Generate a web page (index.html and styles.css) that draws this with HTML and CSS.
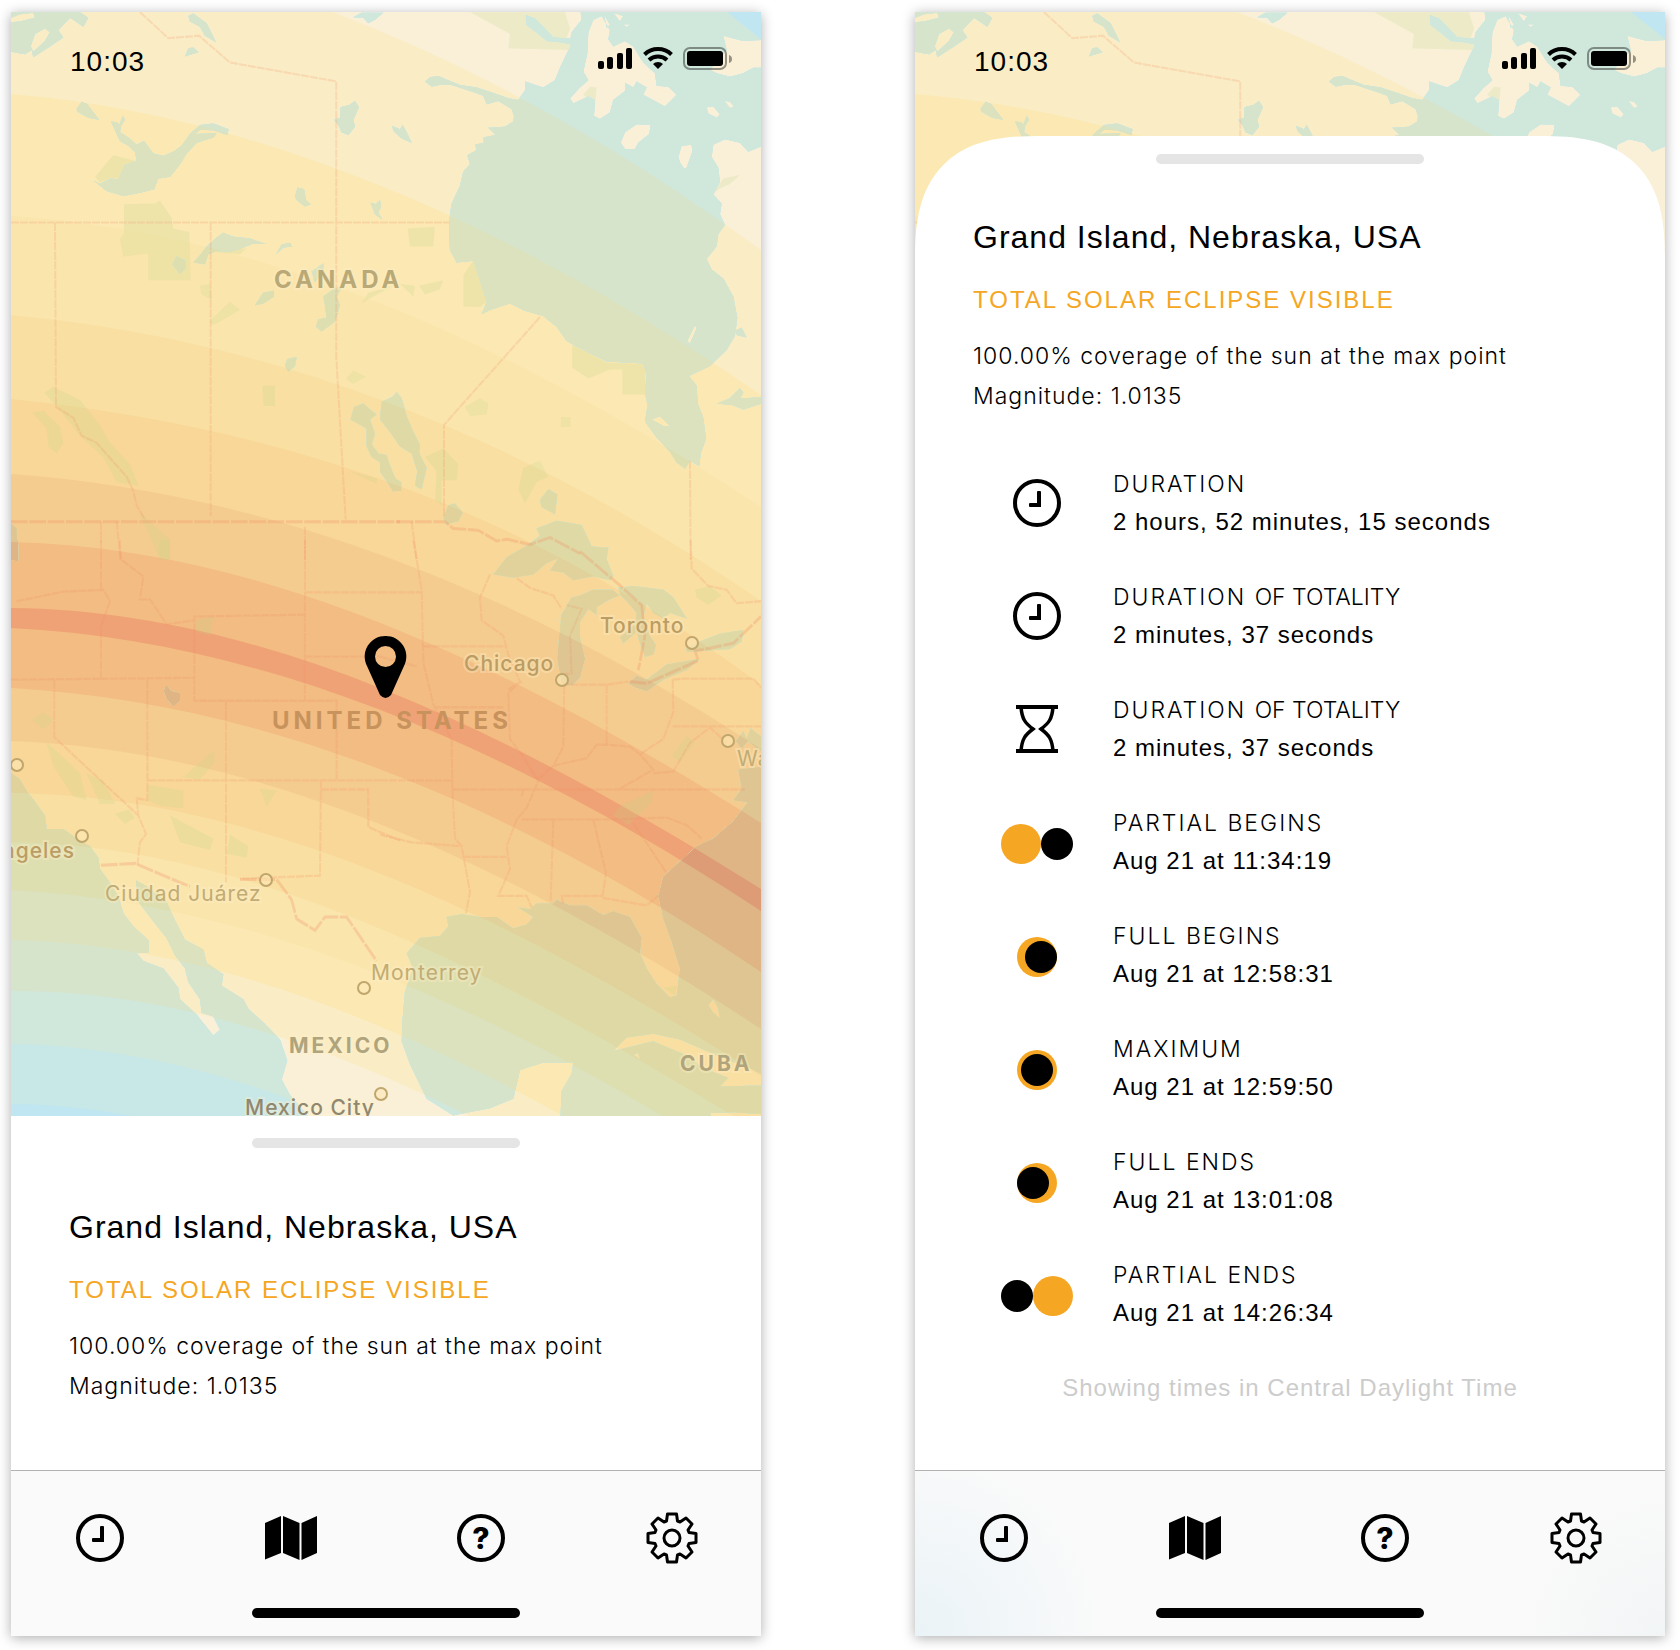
FILE: index.html
```html
<!DOCTYPE html>
<html lang="en">
<head>
<meta charset="utf-8">
<meta name="viewport" content="width=device-width, initial-scale=1">
<title>Eclipse map</title>
<link rel="stylesheet" href="styles.css">
</head>
<body>
<svg class="defs" aria-hidden="true">
  <defs>
    <!-- Areas of equal coverage, nested from the faintest to totality -->
    <g id="bands">
      <path class="b0" d="M0 0H780V1430H0Z"/>
      <path class="b1" d="M0 0H700L761 39 790 60V1420L761 1410C511 1250 261 1107 11 1104L0 1104Z"/>
      <path class="b2" d="M0 0H680L727 12 761 39 790 60V1370L761 1350C511 1190 261 1047 11 1044L0 1044Z"/>
      <path class="b3" d="M0 0H300L333 12C476 67 618 145 761 250L790 270V1300L761 1290C511 1123 261 990 11 991L0 991Z"/>
      <path class="b4" d="M0 94H11C261 115 511 223 761 395L790 415V1245L761 1235C511 1074 261 945 11 940L0 940Z"/>
      <path class="b5" d="M0 216H11C261 232 511 342 761 507L790 525V1190L761 1178C511 1013 261 903 11 890L0 890Z"/>
      <path class="b6" d="M0 315H11C261 338 511 428 761 601L790 620V1145L761 1133C511 979 261 846 11 842L0 842Z"/>
      <path class="b7" d="M0 399H11C261 425 511 497 761 685L790 700V1090L761 1076C511 916 261 796 11 793L0 793Z"/>
      <path class="b8" d="M0 474H11C261 492 511 585 761 749L790 765V1045L761 1029C511 864 261 750 11 741L0 741Z"/>
      <path class="b9" d="M0 542H11C261 547 511 665 761 823L790 838V990L761 972C511 802 261 702 11 688L0 688Z"/>
      <path class="b10" d="M0 608H11C261 610 511 732 761 889L790 905V928L761 911C511 746 261 640 11 628L0 628Z"/>
    </g>

    <!-- Seas and lakes, one path per map tile -->
    <clipPath id="water">
      <path clip-rule="evenodd" transform="scale(.3333 .3571)" d="M33 34V145L75 152 95 140 100 160 150 130 190 105 175 85 210 50 250 75 265 50 240 34ZM92 130L105 95 135 80 150 90 135 115 100 145ZM33 50L60 40 100 36 105 50 60 60 33 62Z
        M565 45L580 38 620 65 648 118 615 100 600 75 570 60ZM555 158L565 135 580 133 596 146 575 152ZM1060 48L1085 36 1150 36 1125 55 1105 65 1090 50Z
        M230 305L245 285 262 292 297 335 265 330 232 312Z
        M333 340L352 343 358 350 368 325 375 335 362 355 360 370 385 385 410 405 432 395 460 430 490 437 520 425 545 408 570 375 600 350 640 346 686 362 682 378 640 365 600 363 585 375 650 373 640 385 590 400 560 430 540 460 510 495 475 500 462 530 420 540 370 549 320 535 280 505 300 515 330 500 355 502 375 462 410 450 405 425 385 408 360 395 345 365Z
        M1003 335L1020 330 1022 300 1050 293 1065 283 1077 300 1060 335 1065 355 1045 378 1025 370 1015 350Z
        M885 550L893 525 912 530 918 560 932 572 915 578 890 560ZM1112 568L1128 572 1140 560 1143 580 1135 595 1147 615 1125 600Z
        M580 735L600 715 620 690 650 665 670 652 700 663 750 668 798 683 760 682 720 697 690 705 650 703 625 712 615 740Z
        M828 712L845 685 870 680 877 690 850 693ZM517 740L530 718 555 728 558 750 540 768ZM765 855L790 820 822 814 822 830 790 850Z
        M970 830L1000 810 1028 800 1010 830 1020 855 1005 900 965 928 948 915 955 895 980 890 975 855ZM935 760L970 738 972 760 945 790Z
        M855 1025L862 1005 890 1000 885 1025 865 1040Z
        M1052 1175L1062 1140 1090 1130 1115 1150 1130 1160 1110 1175 1125 1215 1115 1245 1140 1275 1165 1290 1185 1340 1204 1350 1204 1375 1180 1375 1165 1330 1150 1300 1115 1280 1100 1250 1100 1200Z
        M33 1465L50 1480 52 1568 33 1568Z"/>
      <path clip-rule="evenodd" transform="translate(380 0) scale(.3333 .3571)" d="M600 20L605 55 575 90 572 130 560 150 540 190 525 225 490 245 435 228 437 250 415 280 385 275 345 262 290 245 240 238 205 225 175 213 150 216 135 228 155 242 190 236 215 238 270 255 310 268 320 292 355 283 395 305 402 325 400 340 375 355 325 358 347 378 310 385 312 400 285 405 290 420 262 435 270 460 250 480 240 520 215 570 210 600 207 650 210 700 230 735 280 730 295 770 320 845 305 880 330 868 390 850 435 870 490 885 530 915 560 955 620 985 680 1012 790 1018 800 1050 795 1100 803 1135 795 1180 830 1225 870 1265 890 1295 915 1312 930 1290 958 1305 962 1270 978 1230 970 1170 953 1130 950 1080 927 1053 990 1025 1040 980 1065 940 1072 890 1060 830 1030 780 995 755 980 725 1010 690 1015 655 1035 630 1020 600 1025 570 1000 545 1020 510 1015 470 995 440 1000 405 1035 390 1080 400 1105 425 1143 410 1170 410 1170 20Z
        M640 55L625 90 622 150 610 200 625 225 600 245 570 275 580 290 625 270 645 280 642 325 660 333 690 315 700 280 735 255 735 232 760 245 770 228 800 245 790 265 855 298 890 265 865 243 830 240 825 205 790 175 760 130 735 115 700 130 685 110 690 85 665 45Z
        M672 40L680 78 690 70ZM700 36L730 45 720 60ZM730 68L752 68 740 76Z
        M722 400L735 370 770 348 812 350 808 375 775 400 765 417 735 417ZM895 440L905 408 935 405 937 425 920 470 912 472 900 455Z
        M980 300L1000 298 1020 320 1010 330 985 318ZM1033 282L1050 285 1062 298 1050 303Z
        M1030 100L1090 115 1143 112 1170 115 1170 190 1120 190 1090 205 1050 215 1010 205 990 195 1015 170 1040 140Z
        M815 1175L840 1165 872 1195 850 1193ZM945 910L950 920 930 962 922 955Z"/>
      <path transform="translate(380 0) scale(.3333 .3571)" d="M437 42L465 52 500 85 520 105 570 108 580 90 580 125 540 118 500 115 475 95 440 70ZM35 352L60 362 68 350 80 370 95 400 65 388 42 368Z
        M1012 1130L1050 1115 1080 1087 1090 1100 1080 1115 1145 1113 1145 1130 1090 1147 1060 1135ZM1068 925L1085 918 1100 945 1070 938Z
        M5 1125L40 1110 50 1098 65 1115 80 1165 100 1210 120 1245 118 1270 140 1310 125 1370 105 1360 112 1320 95 1270 60 1250 30 1210 0 1175Z
        M0 1270L20 1275 35 1320 62 1365 40 1378 25 1355 0 1320ZM190 1450L205 1415 225 1410 248 1435 235 1460 200 1468ZM480 1400L505 1370 532 1385 525 1440 485 1420Z"/>
      <path transform="translate(0 540) scale(.3333 .3827)" d="M20 600L60 625 80 655 110 690 135 720 140 755 190 755 230 780 270 800 295 830 300 860 325 890 355 930 370 975 400 1010 445 1045 447 1078 410 1080 430 1100 490 1120 535 1170 540 1200 590 1240 640 1295 660 1280 640 1245 605 1235 600 1200 565 1155 555 1120 525 1085 500 1040 450 985 415 945 408 890 440 905 500 945 520 985 555 1045 610 1070 620 1105 670 1135 665 1165 730 1200 745 1225 790 1260 840 1305 862 1360 845 1410 870 1450 960 1540 0 1540Z
        M492 395L498 378 515 395 540 400 540 420 520 435 500 415ZM40 0L54 0 55 55 45 55Z"/>
      <path clip-rule="evenodd" transform="translate(380 540) scale(.3333 .3827)" d="M340 90L380 45 440 15 480 -11 470 -30 530 -50 605 -39 635 17 685 20 680 50 700 95 690 105 640 95 580 105 550 85 510 80 535 48 500 60 460 90 400 98Z
        M530 215L555 180 575 150 600 145 640 130 698 130 718 145 690 155 650 175 650 195 625 180 600 215 600 255 615 310 600 360 575 380 545 375 532 310 540 230 545 195Z
        M715 125L760 120 850 130 880 150 920 205 870 190 850 205 820 190 800 165 790 200 810 250 828 275 820 300 795 305 780 270 770 240 730 270 720 255 765 220 770 190 740 160 722 145Z
        M745 375L770 355 800 365 860 325 960 310 920 340 850 365 800 395 765 385ZM918 285L960 265 1020 245 1090 235 1085 265 1050 285 960 290 920 292Z
        M1170 590L1120 595 1075 600 1085 650 1060 680 1103 685 1060 735 1000 780 950 800 900 840 850 880 835 930 850 990 875 1050 900 1120 890 1190 870 1195 830 1160 800 1120 780 1080 785 1040 750 985 700 970 670 980 620 955 570 955 530 940 520 950 470 950 450 965 415 960 460 985 440 1005 400 1015 350 985 300 985 245 978 200 985 205 1010 180 1035 120 1040 80 1080 100 1120 75 1180 68 1250 65 1310 90 1370 140 1460 220 1504 240 1500 330 1485 400 1460 420 1385 490 1365 580 1365 575 1395 545 1440 540 1540 1170 1540Z
        M700 1335L740 1300 820 1290 900 1305 980 1335 1050 1360 1110 1380 1143 1395 1170 1400 1170 1425 1020 1428 1045 1405 1000 1390 960 1375 930 1350 860 1325 820 1310 770 1320Z
        M985 1215L1000 1200 1015 1225 1020 1250 1000 1235ZM760 1345L775 1340 780 1357ZM990 1497L1060 1495 1150 1500 1150 1540 1010 1540Z
        M1068 525L1090 500 1100 520 1112 492 1145 515 1170 500 1170 560 1130 545 1105 525 1085 545Z"/>
    </clipPath>

    <symbol id="geography" viewBox="11 12 750 1104">
      <use href="#bands" class="land"/>
      <g class="parks">
        <path transform="scale(.3333 .3571)" d="M372 572L465 570 480 562 515 610 520 640 568 650 572 785 445 785 445 710 370 718 360 670 372 655ZM285 495L340 435 405 450 375 462 355 500 330 498 300 512ZM787 1080H825V1137H790ZM133 1100L160 1083 240 1120 300 1190 330 1240 390 1300 415 1360 350 1350 310 1280 240 1220 190 1160ZM97 1155L130 1150 180 1195 190 1240 170 1270 145 1250 140 1200ZM600 800L630 795 635 840 605 825ZM628 900L690 845 720 868 660 900 640 910ZM1038 1060L1060 1038 1098 1055 1060 1075ZM1085 850L1105 820 1180 800 1110 835ZM640 705L740 695 720 712ZM415 1430L460 1470 510 1510 510 1568 480 1568ZM1050 1320L1130 1340 1130 1355Z"/>
        <path transform="translate(380 0) scale(.3333 .3571)" d="M272 34L555 34 570 80 560 105 575 125 570 140 385 135 390 95ZM83 640L165 635 160 690 90 690ZM250 770L280 730 295 770 320 845 300 860 250 858ZM577 965L680 1015 795 1020 797 1105 727 1105 727 1035 690 1035 625 1060 577 1030ZM117 800L190 785 180 810 135 825ZM60 795L105 800 100 830ZM255 1140L300 1115 325 1130 320 1160 270 1165ZM543 1168H571V1196H543ZM135 1280L190 1255 235 1300 230 1345 185 1345 185 1415 165 1400 170 1320ZM430 1310L480 1290 505 1335 470 1350 435 1410 415 1370ZM1000 545L1030 500 1080 490 1050 515 1015 530ZM610 265L630 243 650 245 645 290Z"/>
        <path transform="translate(0 540) scale(.3333 .3827)" d="M95 470L130 450 160 470 130 495ZM140 530L180 560 240 610 260 680 220 670 160 590ZM260 610L310 630 345 690 300 690ZM345 715L385 705 405 725 375 742ZM445 640L550 655 550 700 480 695 445 680ZM550 620L640 550 645 580 600 625ZM510 720L640 780 630 810 540 790ZM780 650L830 655 800 695ZM690 770L745 800 740 830 680 820ZM480 0H510V50L475 40ZM585 210L640 200 630 250 590 240Z"/>
        <path transform="translate(380 540) scale(.3333 .3827)" d="M945 130L990 120 1025 145 985 170 950 150ZM875 565L920 510 945 530 900 580ZM700 720L720 695 820 655 815 685 745 745ZM850 1170L890 1165 885 1190Z"/>
      </g>
      <g clip-path="url(#water)"><use href="#bands" class="sea"/></g>
      <g class="borders">
        <path transform="scale(.3333 .3571)" d="M165 623L168 1140 220 1170 245 1220 290 1240 380 1335 400 1375 410 1415 435 1455M632 623V1445M33 623H1140M420 34L505 107 597 100 690 175 1009 228V1000L1037 1455M303 1461V1520M350 1461L362 1568M915 1475V1568"/>
        <path transform="translate(380 0) scale(.3333 .3571)" d="M0 623H208M480 888L192 1190V1445M930 1290L932 1568M95 1461L110 1568"/>
        <path transform="translate(0 540) scale(.3333 .3827)" d="M915 0V420M915 137H1140M915 305H1140M915 195L583 200V420H1010V628M33 365L583 360M445 628H1140M678 420V895M442 365V680L410 675 415 720 438 768 420 790 412 850M163 365V515L415 720M303 365V225L330 160 310 130 190 135 50 160M303 0V130M360 0L362 50 430 95 420 155 450 155 500 220 583 210M963 628L960 877 720 885M963 652H1105V750L1200 785"/>
        <path transform="translate(380 540) scale(.3333 .3827)" d="M100 0L125 130 130 320 160 430 215 520 217 650 225 780 245 800 270 920 258 975M0 137H125M0 305L110 330M130 278H380M330 90L300 150 305 210 370 250 385 300 420 370 385 400 390 520 425 560 475 630 440 700 410 730 380 800 390 860 355 930 440 930 455 960M160 437H370M385 390L425 370M0 628H217M553 380L550 540 520 590 620 570 650 535 680 535 750 540 780 560 820 600 720 650M475 625L520 590M545 378H680V535M680 378L745 370M878 365L880 450 850 520 780 560M878 365L913 362H1120L1143 385M878 487H1143M820 610L880 605 930 530 990 490 1040 530M217 652H430L425 670M430 652H1095M425 730H720L860 725 920 745 965 780M520 730L512 945M640 730L678 870 668 930H545L550 950M668 935L800 955 835 930M760 740L860 870M250 828H380M0 770L95 790 240 800M410 100L450 125 520 145 545 180M932 0L935 75 985 120 1040 130 1070 165 1143 160M545 350L575 350 570 250 605 180 560 170"/>
      </g>
      <g class="borders borders-country">
        <path transform="scale(.3333 .3571)" d="M33 1461H1200"/>
        <path transform="translate(380 0) scale(.3333 .3571)" d="M50 1461H195L220 1480 295 1485 350 1515 380 1510 450 1525 510 1505 600 1550"/>
        <path transform="translate(0 540) scale(.3333 .3827)" d="M303 850L405 845 540 895 570 905M720 887L830 887 875 940 890 990 945 1020 975 985 1040 985 1130 1100"/>
        <path transform="translate(380 540) scale(.3333 .3827)" d="M600 30L715 115 785 170 795 250 775 340M750 370L800 375 955 315 945 290 1060 270 1143 200"/>
      </g>
    </symbol>

    <symbol id="icon-status" viewBox="0 0 134 24">
      <rect x="0" y="15" width="6" height="8" rx="2"/><rect x="9" y="11" width="6" height="12" rx="2"/><rect x="19" y="7" width="6" height="16" rx="2"/><rect x="28" y="2" width="6" height="21" rx="2"/>
      <path d="M60 23l-5-5a7 7 0 0 1 10 0Z"/>
      <path d="M51 14a13 13 0 0 1 18 0M46.500 8.500a19.500 19.500 0 0 1 27 0" fill="none" stroke="currentColor" stroke-width="4"/>
      <rect x="86" y="2" width="42" height="21" rx="6" fill="none" stroke="currentColor" stroke-width="2" opacity=".4"/>
      <rect x="89" y="5" width="36" height="15" rx="3"/>
      <path d="M131 9q3 1 3 4t-3 4Z" opacity=".4"/>
    </symbol>
    <symbol id="icon-clock" viewBox="0 0 48 48">
      <circle cx="24" cy="24" r="22" fill="none" stroke="currentColor" stroke-width="4"/>
      <path d="M24 13q0-1 1-1h2q1 0 1 1V28H17q-1 0-1-1V25q0-1 1-1H24Z"/>
    </symbol>
    <symbol id="icon-map" viewBox="0 0 52 44">
      <path d="M0 7L16 0V37L0 43.500ZM18 0L34.500 7V44L18 37ZM36.500 7L52 0V37L36.500 44Z"/>
    </symbol>
    <symbol id="icon-help" viewBox="0 0 48 48">
      <circle cx="24" cy="24" r="22" fill="none" stroke="currentColor" stroke-width="4"/>
      <text x="24" y="35" class="help-mark">?</text>
    </symbol>
    <symbol id="icon-gear" viewBox="-26 -26 52 52">
      <path d="M-4.500-24H4.500L5.500-17 8-16 14-20 20-14 16-8 17-5.500 24-4.500V4.500L17 5.500 16 8 20 14 14 20 8 16 5.500 17 4.500 24H-4.500L-5.500 17-8 16-14 20-20 14-16 8-17 5.500-24 4.500V-4.500L-17-5.500-16-8-20-14-14-20-8-16-5.500-17Z" fill="none" stroke="currentColor" stroke-width="3" stroke-linejoin="round"/>
      <circle r="8" fill="none" stroke="currentColor" stroke-width="3"/>
    </symbol>
    <symbol id="icon-hourglass" viewBox="0 0 42 48">
      <path d="M0 2H42M0 46H42" stroke="currentColor" stroke-width="4"/>
      <path d="M5 2C6 14 9 18 17 24 9 30 6 34 5 46M37 2C36 14 33 18 25 24 33 30 36 34 37 46" fill="none" stroke="currentColor" stroke-width="3.500"/>
    </symbol>
  </defs>
</svg>

<main class="screens">
  <section class="phone">
    <div class="map-area">
      <svg class="map-art" viewBox="11 12 750 1104" preserveAspectRatio="xMidYMin slice" role="img" aria-label="Eclipse path over North America">
        <use href="#geography" x="11" y="12" width="750" height="1104"/>
        <g class="cities">
          <circle cx="17" cy="765" r="6"/><circle cx="82" cy="836" r="6"/><circle cx="266" cy="880" r="6"/><circle cx="364" cy="988" r="6"/><circle cx="381" cy="1094" r="6"/><circle cx="562" cy="680" r="6"/><circle cx="692" cy="643" r="6"/><circle cx="728" cy="741" r="6"/>
        </g>
        <g class="labels">
          <text class="country" x="274" y="288">CANADA</text>
          <text class="country country-warm" x="272" y="729">UNITED STATES</text>
          <text class="country country-small" x="289" y="1053">MEXICO</text>
          <text class="country country-small" x="680" y="1071">CUBA</text>
          <text class="city city-bold" x="464" y="671">Chicago</text>
          <text class="city city-bold" x="600" y="633">Toronto</text>
          <text class="city city-bold city-end" x="75" y="858">Los Angeles</text>
          <text class="city" x="105" y="901">Ciudad Juárez</text>
          <text class="city" x="371" y="980">Monterrey</text>
          <text class="city" x="737" y="766">Washington</text>
          <text class="city city-dark" x="245" y="1115">Mexico City</text>
        </g>
        <path class="pin" fill-rule="evenodd" d="M385.500 636A20.500 20.500 0 0 1 404 666L391 695Q385.500 701 380 695L367 666A20.500 20.500 0 0 1 385.500 636ZM385.500 646A10.500 10.500 0 1 0 385.500 667 10.500 10.500 0 1 0 385.500 646Z"/>
      </svg>
      <header class="status"><time>10:03</time><svg class="status-icons" aria-label="Signal, Wi-Fi, battery"><use href="#icon-status"/></svg></header>
    </div>
    <div class="sheet">
      <div class="handle"></div>
      <h1 class="place">Grand Island, Nebraska, USA</h1>
      <p class="kind">TOTAL SOLAR ECLIPSE VISIBLE</p>
      <p class="facts">100.00% coverage of the sun at the max point<br>Magnitude: 1.0135</p>
    </div>
    <footer class="tabs">
      <nav class="tab-row" aria-label="Main">
        <button class="tab" aria-label="Times"><svg width="48" height="48"><use href="#icon-clock"/></svg></button>
        <button class="tab" aria-label="Map"><svg width="52" height="44"><use href="#icon-map"/></svg></button>
        <button class="tab" aria-label="Help"><svg width="48" height="48"><use href="#icon-help"/></svg></button>
        <button class="tab" aria-label="Settings"><svg width="52" height="52"><use href="#icon-gear"/></svg></button>
      </nav>
      <div class="handle home"></div>
    </footer>
  </section>

  <section class="phone">
    <div class="map-area map-peek">
      <svg class="map-art" viewBox="11 12 750 1104" aria-hidden="true"><use href="#geography" x="11" y="12" width="750" height="1104"/></svg>
      <header class="status"><time>10:03</time><svg class="status-icons" aria-label="Signal, Wi-Fi, battery"><use href="#icon-status"/></svg></header>
    </div>
    <div class="sheet sheet-open">
      <div class="handle"></div>
      <h1 class="place">Grand Island, Nebraska, USA</h1>
      <p class="kind">TOTAL SOLAR ECLIPSE VISIBLE</p>
      <p class="facts">100.00% coverage of the sun at the max point<br>Magnitude: 1.0135</p>
      <ul class="events">
        <li class="event"><svg width="48" height="48"><use href="#icon-clock"/></svg><div><h2 class="event-name">DURATION</h2><p class="event-value">2 hours, 52 minutes, 15 seconds</p></div></li>
        <li class="event"><svg width="48" height="48"><use href="#icon-clock"/></svg><div><h2 class="event-name">DURATION <span class="event-name-tail">OF TOTALITY</span></h2><p class="event-value">2 minutes, 37 seconds</p></div></li>
        <li class="event"><svg width="42" height="48"><use href="#icon-hourglass"/></svg><div><h2 class="event-name">DURATION <span class="event-name-tail">OF TOTALITY</span></h2><p class="event-value">2 minutes, 37 seconds</p></div></li>
        <li class="event"><svg class="phase" width="72" height="40"><circle class="sun" cx="20" cy="20" r="20"/><circle cx="56" cy="20" r="16"/></svg><div><h2 class="event-name">PARTIAL BEGINS</h2><p class="event-value">Aug 21 at 11:34:19</p></div></li>
        <li class="event"><svg class="phase" width="72" height="40"><circle class="sun" cx="36" cy="20" r="20"/><circle cx="40" cy="20" r="16"/></svg><div><h2 class="event-name">FULL BEGINS</h2><p class="event-value">Aug 21 at 12:58:31</p></div></li>
        <li class="event"><svg class="phase" width="72" height="40"><circle class="sun" cx="36" cy="20" r="20"/><circle cx="36" cy="20" r="16"/></svg><div><h2 class="event-name">MAXIMUM</h2><p class="event-value">Aug 21 at 12:59:50</p></div></li>
        <li class="event"><svg class="phase" width="72" height="40"><circle class="sun" cx="36" cy="20" r="20"/><circle cx="32" cy="20" r="16"/></svg><div><h2 class="event-name">FULL ENDS</h2><p class="event-value">Aug 21 at 13:01:08</p></div></li>
        <li class="event"><svg class="phase" width="72" height="40"><circle class="sun" cx="52" cy="20" r="20"/><circle cx="16" cy="20" r="16"/></svg><div><h2 class="event-name">PARTIAL ENDS</h2><p class="event-value">Aug 21 at 14:26:34</p></div></li>
      </ul>
      <p class="zone">Showing times in Central Daylight Time</p>
    </div>
    <footer class="tabs tabs-tinted">
      <nav class="tab-row" aria-label="Main">
        <button class="tab" aria-label="Times"><svg width="48" height="48"><use href="#icon-clock"/></svg></button>
        <button class="tab" aria-label="Map"><svg width="52" height="44"><use href="#icon-map"/></svg></button>
        <button class="tab" aria-label="Help"><svg width="48" height="48"><use href="#icon-help"/></svg></button>
        <button class="tab" aria-label="Settings"><svg width="52" height="52"><use href="#icon-gear"/></svg></button>
      </nav>
      <div class="handle home"></div>
    </footer>
  </section>
</main>
</body>
</html>
```
FILE: styles.css
```css
* { box-sizing: border-box; }

body {
  margin: 0;
  background: #fff;
  color: #000;
  font-family: "Liberation Sans", Arial, sans-serif;
}

h1, h2, p, ul { margin: 0; padding: 0; font-weight: 400; }

.defs { position: absolute; width: 0; height: 0; }

.screens {
  display: flex;
  gap: 154px;
  padding: 12px 15px 14px 11px;
}

.phone {
  flex: 1;
  min-width: 0;
  display: flex;
  flex-direction: column;
  position: relative;
  overflow: clip;
  background: #fff;
  box-shadow: 0 2px 12px rgba(0, 0, 0, .32);
}

/* Map */
.map-area { flex: 1; position: relative; }
.map-peek { flex: none; height: 124px; }
.map-art { position: absolute; top: 0; left: 0; width: 100%; height: 100%; }
.map-peek .map-art { height: auto; }

.land {
  --c0: #faf1d8; --c1: #faf1d8; --c2: #f9f0d7; --c3: #faedc6; --c4: #fbe8b3; --c5: #fae5ad;
  --c6: #f9dfa2; --c7: #f8d798; --c8: #f5cc8f; --c9: #f2bc83; --c10: #efa275;
}
.sea {
  --c0: #bfe6f1; --c1: #c8e7e7; --c2: #d0e8dc; --c3: #d6e4cc; --c4: #dbe2bd; --c5: #dddfb0;
  --c6: #dfdaa5; --c7: #e0d29a; --c8: #dec591; --c9: #dfb585; --c10: #dd9b76;
}
.b0 { fill: var(--c0); } .b1 { fill: var(--c1); } .b2 { fill: var(--c2); } .b3 { fill: var(--c3); }
.b4 { fill: var(--c4); } .b5 { fill: var(--c5); } .b6 { fill: var(--c6); } .b7 { fill: var(--c7); }
.b8 { fill: var(--c8); } .b9 { fill: var(--c9); } .b10 { fill: var(--c10); }
.parks { fill: rgba(191, 217, 134, .2); }
.borders { fill: none; stroke: rgba(246, 140, 100, .2); stroke-width: 6; stroke-dasharray: 24 3; }
.borders-country { stroke: rgba(240, 130, 90, .25); stroke-width: 8; stroke-dasharray: 50 5; }

.cities { fill: rgba(253, 232, 180, .6); stroke: #c0a66c; stroke-width: 2; }
.labels { font-family: Inter, sans-serif; stroke: rgba(255, 240, 200, .35); stroke-width: 4; paint-order: stroke; }
.country { font-size: 24px; font-weight: 700; letter-spacing: 4px; fill: #b8a976; }
.country-warm { fill: #c7925c; stroke: none; }
.country-small { font-size: 21px; letter-spacing: 3px; fill: #b0a47c; }
.city { font-size: 21px; letter-spacing: 1px; fill: #c0ac74; }
.city-bold { font-weight: 500; fill: #bb9d64; }
.city-end { text-anchor: end; }
.city-dark { font-weight: 500; fill: #8f8770; }
.pin { fill: #000; }

/* Status bar */
.status {
  position: relative;
  display: flex;
  justify-content: space-between;
  align-items: center;
  padding: 33px 29px 0 59px;
}
.status time { font-size: 28px; line-height: 34px; letter-spacing: 1px; }
.status-icons { width: 134px; height: 24px; margin-bottom: 8px; }

/* Details sheet */
.sheet { position: relative; background: #fff; padding: 22px 58px 64px; }
.sheet-open { flex: 1; padding: 18px 58px 63px; border-radius: 104px 104px 0 0; }
@supports (corner-shape: squircle) {
  .sheet-open { border-radius: 124px 124px 0 0; corner-shape: superellipse(1.4); }
}
.handle {
  width: 268px;
  height: 10px;
  margin: 0 auto;
  border-radius: 5px;
  background: #e5e5e5;
}
.place { margin-top: 59px; font-size: 32px; line-height: 40px; letter-spacing: 1px; }
.sheet-open .place { margin-top: 53px; }
.kind { margin-top: 27px; font-size: 24px; line-height: 32px; letter-spacing: 2px; color: #f5a623; }
.facts { margin-top: 20px; font-family: Inter, sans-serif; font-weight: 300; font-size: 23px; line-height: 40px; letter-spacing: 1px; }

.events { display: grid; gap: 37px; margin-top: 49px; list-style: none; }
.event { display: grid; grid-template-columns: 128px 1fr; column-gap: 12px; align-items: center; }
.event > svg { justify-self: center; }
.event > .phase { margin-top: 4px; }
.event-name { font-family: Inter, sans-serif; font-weight: 300; font-size: 23px; line-height: 38px; letter-spacing: 2px; }
.event-name-tail { letter-spacing: 0; }
.event-value { font-size: 24px; line-height: 38px; letter-spacing: 1px; }
.sun { fill: #f5a623; }
.zone { margin-top: 37px; font-size: 24px; line-height: 38px; letter-spacing: 1px; text-align: center; color: #ccc; }

/* Tab bar */
.tabs { position: relative; padding-bottom: 18px; border-top: 1px solid #b2b2b2; background: #fafafa; }
.tabs-tinted {
  background:
    radial-gradient(circle at 0 100%, #eaf3f7, rgba(250, 250, 250, 0) 190px),
    radial-gradient(circle at 100% 100%, #f2f5f6, rgba(250, 250, 250, 0) 150px),
    #fafafa;
}
.tab-row { display: flex; justify-content: space-between; align-items: center; height: 137px; padding: 0 63px 4px; }
.tab { display: flex; justify-content: center; width: 52px; padding: 0; border: 0; background: none; color: inherit; }
.home { background: #000; }
.help-mark { font-family: Inter, sans-serif; font-weight: 800; font-size: 30px; text-anchor: middle; }
```
